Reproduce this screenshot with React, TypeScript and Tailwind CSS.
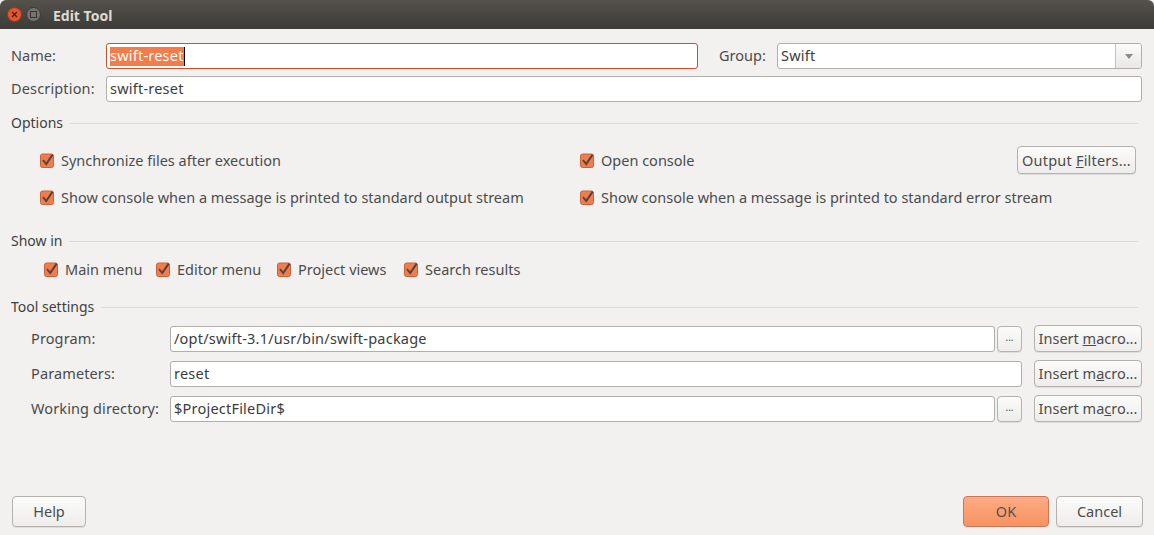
import React from 'react';

const fieldCls = 'h-[26px] bg-white border border-[#b2aea9] rounded-[3px] px-[3px] pb-[1px] flex items-center text-[#3c3c3c] tracking-[0.22px] min-w-0';
const btnCls = 'flex items-center justify-center bg-gradient-to-b from-[#fbfbfa] to-[#eeedec] border border-[#b5b1ac] rounded-[4px] text-[#4c4c4c] shadow-[0_1px_0_#ddd]';

const Check: React.FC<{ label: string; className?: string }> = ({ label, className }) => (
    <div className={`flex items-center gap-[7px] ${className ?? ''}`}>
        <svg width="14" height="15" viewBox="0 0 14 15" className="shrink-0">
            <rect x="0.5" y="1" width="13" height="13.5" rx="2" fill="#ee7e50" stroke="#c8623a" />
            <path d="M3 7 L6.2 11 L12.6 1.6" fill="none" stroke="#5d4037" strokeWidth="2" />
        </svg>
        <span className="whitespace-nowrap">{label}</span>
    </div>
);

const Section: React.FC<{ title: string }> = ({ title }) => (
    <div className="flex items-center gap-[7px] h-[18px] pl-[11px] pr-[16px]">
        <span className="text-[14px] text-[#3f3f3f] whitespace-nowrap">{title}</span>
        <div className="flex-1 h-px bg-[#dcdad7]" />
    </div>
);

// underlines the mnemonic letter like GTK does
const Macro: React.FC<{ before: string; u: string; after: string }> = ({ before, u, after }) => (
    <button className={`${btnCls} w-[108px] h-[27px] shrink-0`}>
        <span className="whitespace-pre">{before}<span className="underline">{u}</span>{after}</span>
    </button>
);

const ToolRow: React.FC<{ label: string; value: string; browse?: boolean; before: string; u: string; after: string }> = ({ label, value, browse, before, u, after }) => (
    <div className="flex items-center h-[27px] pl-[31px] pr-[12px]">
        <span className="w-[139px] shrink-0 text-[#4a4a4a] tracking-[0.12px]">{label}</span>
        <div className={`${fieldCls} flex-1`}>{value}</div>
        {browse && <button className={`${btnCls} w-[25px] h-[26px] ml-[2px] text-[10px] pb-[4px]`}>...</button>}
        <div className="w-[12px] shrink-0" />
        <Macro before={before} u={u} after={after} />
    </div>
);

export default function App() {
    return (
        <div className="w-[1154px] h-[535px] overflow-hidden flex flex-col bg-[#f2f1f0] text-[14.5px] leading-none text-[#4c4c4c] font-['Noto_Sans',sans-serif]">
            {/* Title bar */}
            <div className="h-[29px] shrink-0 flex items-center bg-gradient-to-b from-[#55524c] to-[#3c3b37] rounded-t-[6px] pl-[7px]">
                <div className="w-[15px] h-[15px] rounded-full bg-[#e8552a] border border-[#8f3a1c] flex items-center justify-center">
                    <svg width="7" height="7" viewBox="0 0 7 7"><path d="M1 1 L6 6 M6 1 L1 6" stroke="#4a2114" strokeWidth="1.4" /></svg>
                </div>
                <div className="w-[15px] h-[15px] rounded-full bg-[#75736d] border border-[#3a3935] flex items-center justify-center ml-[4px]">
                    <div className="w-[7px] h-[7px] border border-[#35342f]" />
                </div>
                <span className="ml-[12px] mt-[2px] font-bold text-[14px] text-[#dfdbd2]">Edit Tool</span>
            </div>

            {/* Name / Group */}
            <div className="flex items-center h-[26px] mt-[14px] pl-[11px] pr-[12px]">
                <span className="w-[95px] shrink-0 pb-[2px]">Name:</span>
                <div className="w-[592px] h-[26px] bg-white border border-[#c8512a] rounded-[3px] px-[3px] flex items-center tracking-[0.22px]">
                    <span className="bg-[#f47c4b] text-white h-[19px] pb-[1px] flex items-center border-r border-black">swift-reset</span>
                </div>
                <span className="ml-[21px] w-[58px] shrink-0 pb-[2px]">Group:</span>
                <div className="flex-1 h-[26px] flex bg-white border border-[#b2aea9] rounded-[3px] overflow-hidden">
                    <span className="flex-1 flex items-center px-[3px] pb-[1px] text-[#3c3c3c] tracking-[0.22px]">Swift</span>
                    <div className="w-[26px] border-l border-[#c4c0bb] bg-gradient-to-b from-[#fbfbfa] to-[#e9e8e6] flex items-center justify-center">
                        <svg width="8" height="5" viewBox="0 0 8 5"><path d="M0 0 H8 L4 5 Z" fill="#8a8a8a" /></svg>
                    </div>
                </div>
            </div>

            {/* Description */}
            <div className="flex items-center h-[26px] mt-[7px] pl-[11px] pr-[12px]">
                <span className="w-[95px] shrink-0 pb-[2px] tracking-[0.15px]">Description:</span>
                <div className={`${fieldCls} flex-1`}>swift-reset</div>
            </div>

            <div className="mt-[12px]"><Section title="Options" /></div>

            <div className="flex items-center h-[28px] mt-[14px] pl-[40px] pr-[18px]">
                <Check label="Synchronize files after execution" className="w-[540px]" />
                <Check label="Open console" className="flex-1" />
                <button className={`${btnCls} w-[119px] h-[28px] tracking-[0.2px]`}>
                    <span className="whitespace-pre">Output <span className="underline">F</span>ilters...</span>
                </button>
            </div>
            <div className="flex items-center h-[18px] mt-[14px] pl-[40px]">
                <Check label="Show console when a message is printed to standard output stream" className="w-[540px]" />
                <Check label="Show console when a message is printed to standard error stream" />
            </div>

            <div className="mt-[26px]"><Section title="Show in" /></div>

            <div className="flex items-center h-[18px] mt-[10px] pl-[44px]">
                <Check label="Main menu" className="w-[112px]" />
                <Check label="Editor menu" className="w-[121px]" />
                <Check label="Project views" className="w-[127px]" />
                <Check label="Search results" />
            </div>

            <div className="mt-[20px]"><Section title="Tool settings" /></div>

            <div className="flex flex-col gap-[8px] mt-[9px]">
                <ToolRow label="Program:" value="/opt/swift-3.1/usr/bin/swift-package" browse before="Insert " u="m" after="acro..." />
                <ToolRow label="Parameters:" value="reset" before="Insert m" u="a" after="cro..." />
                <ToolRow label="Working directory:" value="$ProjectFileDir$" browse before="Insert ma" u="c" after="ro..." />
            </div>

            {/* Footer */}
            <div className="mt-auto mb-[8px] flex items-center pl-[12px] pr-[11px]">
                <button className={`${btnCls} w-[74px] h-[31px]`}>Help</button>
                <div className="flex-1" />
                <button className="w-[86px] h-[31px] flex items-center justify-center rounded-[4px] border border-[#c9795a] bg-gradient-to-b from-[#fdab85] to-[#f8925f] text-[#55504c]">OK</button>
                <button className={`${btnCls} w-[87px] h-[31px] ml-[7px]`}>Cancel</button>
            </div>
        </div>
    );
}
